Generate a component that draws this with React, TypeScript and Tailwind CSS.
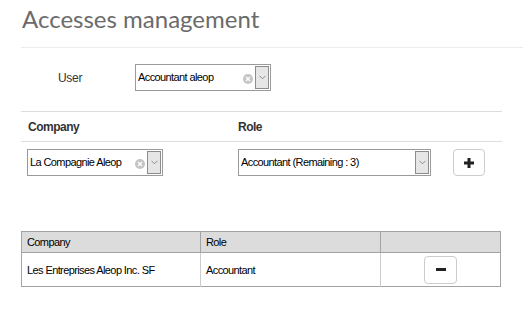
import React from "react";

const font = { fontFamily: '"Liberation Sans", Arial, sans-serif' };

function Chevron() {
  return (
    <svg width="7" height="5" viewBox="0 0 7 5">
      <path d="M0.5 0.8 L3.5 3.8 L6.5 0.8" fill="none" stroke="#8a8a8a" strokeWidth="1" />
    </svg>
  );
}

function ClearIcon() {
  return (
    <svg width="10" height="10" viewBox="0 0 10 10">
      <circle cx="5" cy="5" r="5" fill="#c4c4c4" />
      <path d="M3 3 L7 7 M7 3 L3 7" stroke="#fff" strokeWidth="1.4" />
    </svg>
  );
}

function DropBtn() {
  return (
    <div className="flex h-[23px] w-[14px] items-center justify-center border border-[#8c8c8c] bg-[#e6e6e6]">
      <Chevron />
    </div>
  );
}

function Select({ text, width, clear }: { text: string; width: string; clear?: boolean }) {
  return (
    <div className={`flex h-[27px] items-center border border-[#9a9a9a] bg-white pl-[2px] pr-[1px] ${width}`}>
      <span className="flex-1 truncate text-[11px] tracking-[-0.6px] text-black">{text}</span>
      {clear && (
        <span className="mr-[2px] mt-[3px] flex items-center">
          <ClearIcon />
        </span>
      )}
      <DropBtn />
    </div>
  );
}

export default function App() {
  return (
    <div className="h-[312px] w-[523px] overflow-hidden bg-white pl-[21px]" style={font}>
      <h1
        className="pt-[4px] pl-[1px] text-[24px] leading-[30px] text-[#6b6b6b]"
        style={{ fontFamily: 'Lato, sans-serif' }}
      >
        Accesses management
      </h1>
      <div className="mt-[13px] h-px bg-[#ececec]" />

      <div className="mt-[16px] flex items-center">
        <span className="ml-[37px] w-[77px] text-[12px] tracking-[-0.3px] text-[#333]">User</span>
        <Select text="Accountant aleop" width="w-[136px]" clear />
      </div>

      <div className="mr-[21px] mt-[20px] h-px bg-[#dddddd]" />
      <div className="mr-[21px] flex h-[29px] items-center text-[12px] font-bold tracking-[-0.5px] text-[#333]">
        <span className="ml-[7px] w-[210px]">Company</span>
        <span>Role</span>
      </div>
      <div className="mr-[21px] h-px bg-[#dddddd]" />

      <div className="mt-[7px] flex items-start">
        <div className="ml-[6px]">
          <Select text="La Compagnie Aleop" width="w-[136px]" clear />
        </div>
        <div className="ml-[75px]">
          <Select text="Accountant (Remaining : 3)" width="w-[193px]" />
        </div>
        <button className="ml-[22px] flex h-[27px] w-[32px] items-center justify-center rounded-[4px] border border-[#cccccc] bg-white">
          <svg width="10" height="10" viewBox="0 0 10 10">
            <path d="M5 0 V10 M0 5 H10" stroke="#222" strokeWidth="3" />
          </svg>
        </button>
      </div>

      <table className="mt-[55px] w-[480px] border-collapse border border-[#a3a3a3] text-[11px] tracking-[-0.6px] text-black">
        <thead>
          <tr className="h-[21px] bg-[#dcdcdc]">
            <th className="w-[179px] border border-[#a3a3a3] pl-[5px] pt-[1px] text-left font-normal">Company</th>
            <th className="w-[180px] border border-[#a3a3a3] pl-[5px] pt-[1px] text-left font-normal">Role</th>
            <th className="border border-[#a3a3a3]"></th>
          </tr>
        </thead>
        <tbody>
          <tr className="h-[34px]">
            <td className="border-r border-[#cccccc] pl-[5px] pt-[1px]">Les Entreprises Aleop Inc. SF</td>
            <td className="border-r border-[#cccccc] pl-[5px] pt-[1px]">Accountant</td>
            <td className="text-center">
              <button className="inline-flex h-[28px] w-[33px] items-center justify-center rounded-[4px] border border-[#cccccc] bg-white align-middle">
                <svg width="10" height="4" viewBox="0 0 10 4">
                  <rect width="10" height="3" fill="#222" />
                </svg>
              </button>
            </td>
          </tr>
        </tbody>
      </table>
    </div>
  );
}
